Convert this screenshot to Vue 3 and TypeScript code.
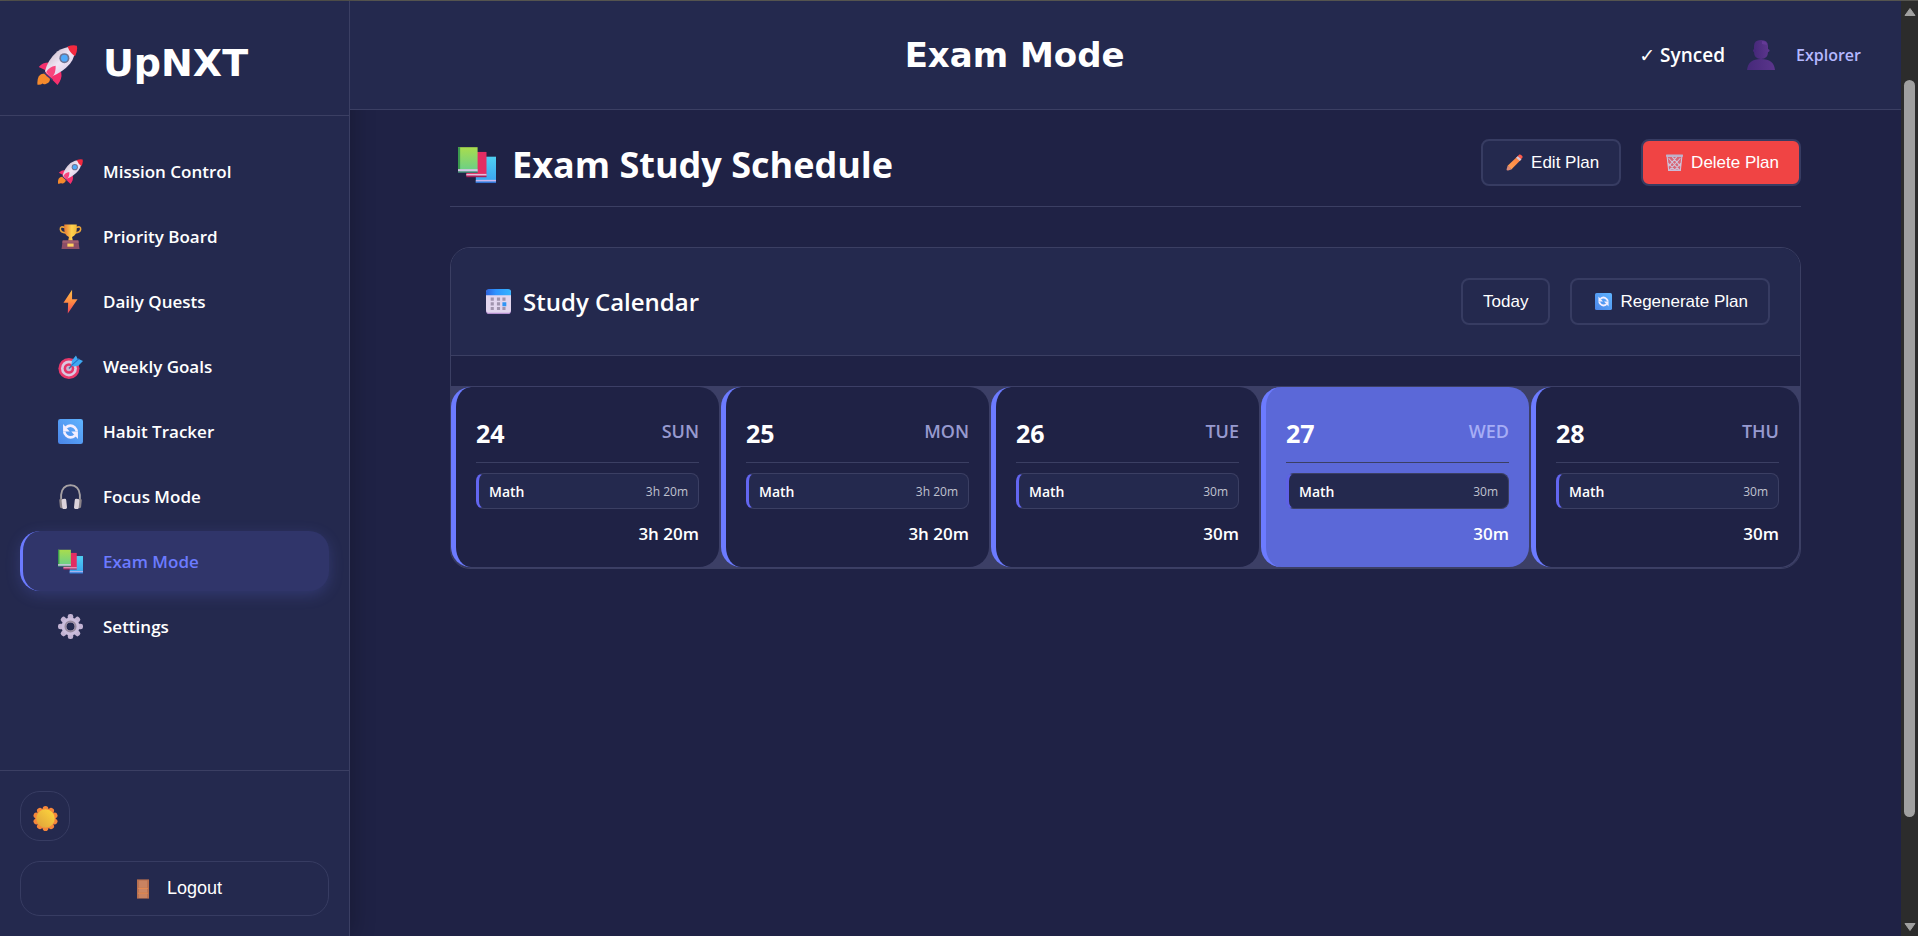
<script setup lang="ts">
interface NavItem {
  label: string
  icon: string
  active?: boolean
}

interface StudyDay {
  date: number
  weekday: string
  subject: string
  duration: string
  today?: boolean
}

const navItems: NavItem[] = [
  { label: 'Mission Control', icon: 'rocket' },
  { label: 'Priority Board', icon: 'trophy' },
  { label: 'Daily Quests', icon: 'bolt' },
  { label: 'Weekly Goals', icon: 'target' },
  { label: 'Habit Tracker', icon: 'refresh' },
  { label: 'Focus Mode', icon: 'headphones' },
  { label: 'Exam Mode', icon: 'books', active: true },
  { label: 'Settings', icon: 'gear' },
]

const days: StudyDay[] = [
  { date: 24, weekday: 'SUN', subject: 'Math', duration: '3h 20m' },
  { date: 25, weekday: 'MON', subject: 'Math', duration: '3h 20m' },
  { date: 26, weekday: 'TUE', subject: 'Math', duration: '30m' },
  { date: 27, weekday: 'WED', subject: 'Math', duration: '30m', today: true },
  { date: 28, weekday: 'THU', subject: 'Math', duration: '30m' },
]

const gearAngles: number[] = [0, 45, 90, 135, 180, 225, 270, 315]
const sunAngles: number[] = [0, 36, 72, 108, 144, 180, 216, 252, 288, 324]
</script>

<template>
  <div class="shell">
    <svg class="sprite" aria-hidden="true">
      <defs>
        <linearGradient id="g-hull" x1="0" y1="0" x2="1" y2="1">
          <stop offset="0" stop-color="#b9a9b8" /><stop offset=".5" stop-color="#f1e6f5" /><stop offset="1" stop-color="#cdbfe0" />
        </linearGradient>
        <linearGradient id="g-gold" x1="0" y1="0" x2="1" y2="0">
          <stop offset="0" stop-color="#e87a35" /><stop offset=".6" stop-color="#ffd34d" /><stop offset="1" stop-color="#f2b93c" />
        </linearGradient>
        <linearGradient id="g-bolt" x1="0" y1="0" x2="0" y2="1">
          <stop offset="0" stop-color="#ffc149" /><stop offset=".5" stop-color="#ff8b43" /><stop offset="1" stop-color="#f0405a" />
        </linearGradient>
        <linearGradient id="g-blue" x1="1" y1="0" x2="0" y2="1">
          <stop offset="0" stop-color="#5fb4ff" /><stop offset="1" stop-color="#4a85e8" />
        </linearGradient>
        <linearGradient id="g-green" x1="0" y1="0" x2="0" y2="1">
          <stop offset="0" stop-color="#a9dc4d" /><stop offset="1" stop-color="#66cf8b" />
        </linearGradient>
        <linearGradient id="g-cyan" x1="0" y1="0" x2="0" y2="1">
          <stop offset="0" stop-color="#4fd0f2" /><stop offset="1" stop-color="#3aa2f0" />
        </linearGradient>
        <linearGradient id="g-cal" x1="0" y1="0" x2="1" y2="0">
          <stop offset="0" stop-color="#2c62dd" /><stop offset=".4" stop-color="#2f94ff" /><stop offset="1" stop-color="#35b4ff" />
        </linearGradient>
        <linearGradient id="g-sun" x1="1" y1="0" x2="0" y2="1">
          <stop offset="0" stop-color="#ffd83d" /><stop offset="1" stop-color="#dda03a" />
        </linearGradient>
        <linearGradient id="g-user" x1="0" y1="0" x2="1" y2="0">
          <stop offset="0" stop-color="#46297a" /><stop offset="1" stop-color="#5b358c" />
        </linearGradient>
        <linearGradient id="g-pencil" x1="1" y1="0" x2="0" y2="1">
          <stop offset="0" stop-color="#ff7a3c" /><stop offset="1" stop-color="#ffa354" />
        </linearGradient>
      </defs>

      <symbol id="rocket" viewBox="0 0 32 32">
        <path d="M1 25q2-3 6-2l3 4q0 3-3 4-2 1-3-.2-1 1.200-4 1Q-.5 28 1 25z" fill="#f58a2c" />
        <path d="M9 14Q4 14 1 17.500L6 20l1 5 5 3 4 4Q20 27 19 22z" fill="#f5306d" />
        <path d="M6 21Q8 12 16 5 23 .5 30 1.500 31 8 26 15 20 22 10.500 25.500z" fill="url(#g-hull)" />
        <path d="M24 1.200Q28-.3 31.500.500q.8 4.500-1.500 8.500Q26 6.500 24 1.200z" fill="#f3293f" />
        <circle cx="21.500" cy="10.500" r="4" fill="#6d7392" /><circle cx="21.500" cy="10.500" r="2.700" fill="#4fa9fa" />
        <path d="M14.500 16.500q.5 6-3.500 10L7 21.500q2-4 7.500-5z" fill="#f8457d" />
        <path d="M5 22l7 6" stroke="#373f6c" stroke-width="1.200" />
      </symbol>

      <symbol id="trophy" viewBox="0 0 32 32">
        <path d="M9 4.500Q2.500 2 3 7q.5 4 7 4.500M23 4.500Q29.500 2 29 7q-.5 4-7 4.500" fill="none" stroke="#e9a43a" stroke-width="2" />
        <path d="M8 .5h16v6q0 8-6 10l1 5h-6l1-5q-6-2-6-10z" fill="url(#g-gold)" />
        <path d="M6 21h20l1.500 11h-23z" fill="#8d4d66" /><path d="M6 21h20l.5 3h-21z" fill="#a35f70" />
        <rect x="12" y="25" width="8" height="4" fill="#ffd061" />
      </symbol>

      <symbol id="bolt" viewBox="0 0 32 32">
        <path d="M18 1 7 17.500h6L12.500 31.500 25 13h-7z" fill="url(#g-bolt)" />
      </symbol>

      <symbol id="target" viewBox="0 0 32 32">
        <circle cx="14" cy="18.500" r="13.500" fill="#e8386a" /><circle cx="14" cy="18.500" r="10.200" fill="#dcc7df" />
        <circle cx="14" cy="18.500" r="6.800" fill="#e53467" /><circle cx="14" cy="18.500" r="3.500" fill="#c8b7d4" />
        <path d="M14 18.500 24 8.500" stroke="#476fa5" stroke-width="2" />
        <path d="m17 14 1-6 5-6 2 4 1.500.5L32 9l-6 6-6 1z" fill="#3ea8f2" /><path d="m18 14 9-8" stroke="#236fc4" stroke-width="1.300" />
      </symbol>

      <symbol id="refresh" viewBox="0 0 32 32">
        <rect width="32" height="32" rx="3" fill="url(#g-blue)" />
        <path d="M10 11Q16 6 21.500 11q2.500 2.500 2.500 5M22 21Q16 26 10.500 21 8 18.500 8 16" fill="none" stroke="#f3eeff" stroke-width="3.400" />
        <path d="M6.500 6.500v9.500H15zM25.500 25.500V16H17z" fill="#f3eeff" />
      </symbol>

      <symbol id="headphones" viewBox="0 0 32 32">
        <path d="M4 20V14Q5 2 16 1.500 27 2 28 14v6" fill="none" stroke="#a7a2a5" stroke-width="2.400" />
        <rect x="2" y="19" width="5" height="12" rx="2" fill="#8b8388" transform="rotate(-6 4 25)" />
        <rect x="25" y="19" width="5" height="12" rx="2" fill="#8b8388" transform="rotate(6 28 25)" />
        <rect x="5" y="19" width="6" height="13" rx="2" fill="#dcd3db" transform="rotate(-6 8 25)" />
        <rect x="21" y="19" width="6" height="13" rx="2" fill="#dcd3db" transform="rotate(6 24 25)" />
      </symbol>

      <symbol id="books" viewBox="0 0 32 32">
        <path d="M15 9h17v22H15z" fill="url(#g-cyan)" /><path d="M15 28.500h17V30H15z" fill="#cbb7ee" /><path d="M15 30h17v1.200H15z" fill="#3174d6" />
        <path d="M7 5h17v20H7z" fill="#e32d63" /><path d="M7 23.500h17v1.500H7z" fill="#e6bfdb" /><path d="M7 25h17v1.300H7z" fill="#a91e57" />
        <path d="M0 1h16.500v21H0z" fill="url(#g-green)" /><path d="M0 1h1.800v21H0z" fill="#3b9a4e" />
        <path d="M0 19.500h16.500v2H0z" fill="#d4c5e7" /><path d="M0 21.500h16.500v1.200H0z" fill="#39786e" />
      </symbol>

      <symbol id="gear" viewBox="0 0 32 32">
        <rect v-for="a in gearAngles" :key="a" x="12.500" y="0" width="7" height="9" rx="3" fill="#c3b3d3" :transform="`rotate(${a} 16 16)`" />
        <circle cx="16" cy="16" r="8.500" fill="none" stroke="#cbbddc" stroke-width="6" />
        <circle cx="16" cy="16" r="6.500" fill="none" stroke="#978a9f" stroke-width="2.500" />
      </symbol>

      <symbol id="sun" viewBox="0 0 32 32">
        <circle v-for="a in sunAngles" :key="a" cx="16" cy="3.600" r="3.600" fill="#f5873b" :transform="`rotate(${a} 16 16)`" />
        <circle cx="16" cy="16" r="13" fill="#f5873b" /><circle cx="16" cy="16" r="11.800" fill="url(#g-sun)" />
      </symbol>

      <symbol id="door" viewBox="0 0 20 32">
        <rect x="0" y="0" width="20" height="32" fill="#b8704f" /><rect x="3" y="2" width="14" height="12" fill="#c98361" />
        <rect x="3" y="16" width="14" height="6" fill="#cb8664" /><rect x="3" y="24" width="14" height="7" fill="#c98361" />
        <path d="M2 15h16M2 23h16" stroke="#ed9153" stroke-width="1.500" />
      </symbol>

      <symbol id="user" viewBox="0 0 28 30">
        <path d="M0 30Q1 19 14 19t14 11z" fill="url(#g-user)" />
        <path d="M7 6Q7 0 14 0t7 6v6q0 7-7 7t-7-7z" fill="url(#g-user)" />
        <circle cx="7.500" cy="10.500" r="1.500" fill="#46297a" /><circle cx="21" cy="10.500" r="1.500" fill="#5b358c" />
        <path d="M15 1q5 0 5 4l-5-1z" fill="#643a96" />
      </symbol>

      <symbol id="pencil" viewBox="0 0 32 32">
        <path d="M3 22 22 4l7 6L10 29z" fill="url(#g-pencil)" /><path d="M22 4l3-3q3-1 6 3 1 2-1 4l-2 2z" fill="#ff5a4b" />
        <path d="m19 7 3-3 7 6-3 3z" fill="#d5c6d8" /><path d="m3 22-2 7q0 2.500 3 2l6-2q-1-5-7-7z" fill="#d98a78" />
      </symbol>

      <symbol id="trash" viewBox="0 0 32 32">
        <path d="M2 3h28l-3 28H5z" fill="#d96576" />
        <path d="M2 4h28l-3 27H5zM5 8l20 22M12 6l15 17M3 16l14 15M27 8 7 30M20 6 5 23M29 16 16 31" fill="none" stroke="#cfc4da" stroke-width="2" />
        <rect x="0" y="1" width="32" height="4" rx="1" fill="#bdb2cb" /><path d="M5 29h22v3H5z" fill="#c9bcd8" />
      </symbol>

      <symbol id="calendar" viewBox="0 0 32 32">
        <rect x="0" y="1" width="32" height="31" rx="4" fill="#b58fd0" /><rect x="0" y="1" width="32" height="29.500" rx="4" fill="#e2d6ee" />
        <path d="M0 8V4q0-4 4-4h24q4 0 4 4v4z" fill="url(#g-cal)" />
        <path d="M6 11h4v4H6zM14 11h4v4h-4zM21 11h4v4h-4zM6 17h4v4H6zM14 17h4v4h-4zM6 23h4v4H6zM14 23h4v4h-4zM21 23h4v4h-4z" fill="#a094ad" />
        <path d="M21 17h5v5h-5z" fill="#2f94f5" />
      </symbol>
    </svg>

    <aside class="sidebar">
      <div class="brand">
        <svg class="brand-icon" aria-hidden="true"><use href="#rocket" /></svg>
        <span class="brand-name">UpNXT</span>
      </div>
      <nav class="nav">
        <a v-for="item in navItems" :key="item.label" href="#" class="nav-item" :class="{ active: item.active }">
          <svg class="nav-icon" aria-hidden="true"><use :href="`#${item.icon}`" /></svg>
          {{ item.label }}
        </a>
      </nav>
      <div class="side-foot">
        <button type="button" class="theme" aria-label="Switch theme">
          <svg class="nav-icon" aria-hidden="true"><use href="#sun" /></svg>
        </button>
        <button type="button" class="logout">
          <svg class="door" aria-hidden="true"><use href="#door" /></svg>
          Logout
        </button>
      </div>
    </aside>

    <div class="page">
      <header class="topbar">
        <h1 class="page-title">Exam Mode</h1>
        <div class="account">
          <span class="synced"><span class="tick">✓</span> Synced</span>
          <svg class="avatar" aria-hidden="true"><use href="#user" /></svg>
          <span class="user-name">Explorer</span>
        </div>
      </header>

      <main class="content">
        <div class="plan-head">
          <h2 class="plan-title">
            <svg class="books" aria-hidden="true"><use href="#books" /></svg>
            Exam Study Schedule
          </h2>
          <div class="actions">
            <button type="button" class="btn">
              <svg class="btn-icon" aria-hidden="true"><use href="#pencil" /></svg>Edit Plan
            </button>
            <button type="button" class="btn danger">
              <svg class="btn-icon" aria-hidden="true"><use href="#trash" /></svg>Delete Plan
            </button>
          </div>
        </div>

        <section class="calendar">
          <div class="cal-head">
            <h3 class="cal-title">
              <svg class="nav-icon" aria-hidden="true"><use href="#calendar" /></svg>
              Study Calendar
            </h3>
            <div class="actions">
              <button type="button" class="btn">Today</button>
              <button type="button" class="btn">
                <svg class="btn-icon" aria-hidden="true"><use href="#refresh" /></svg>Regenerate Plan
              </button>
            </div>
          </div>
          <div class="days">
            <article v-for="day in days" :key="day.date" class="day" :class="{ today: day.today }">
              <div class="day-head">
                <span class="date">{{ day.date }}</span>
                <span class="weekday">{{ day.weekday }}</span>
              </div>
              <div class="task">
                <span class="subject">{{ day.subject }}</span>
                <span class="duration">{{ day.duration }}</span>
              </div>
              <div class="total">{{ day.duration }}</div>
            </article>
          </div>
        </section>
      </main>
    </div>

    <div class="scrollbar" aria-hidden="true">
      <svg class="arrow" viewBox="0 0 12 10"><path d="M6 1.500 11 8.500H1z" /></svg>
      <div class="track"><div class="thumb"></div></div>
      <svg class="arrow" viewBox="0 0 12 10"><path d="M6 8.500 11 1.500H1z" /></svg>
    </div>
  </div>
</template>

<style>
body {
  margin: 0;
  background: #1f2245;
}
</style>

<style scoped>
.shell {
  --panel: #24294e;
  --base: #1f2245;
  --line: #3b3f63;
  --accent: #6c7bff;
  box-sizing: border-box;
  display: flex;
  min-height: 100vh;
  border-top: 1px solid #55544f;
  background: var(--base);
  color: #fff;
  font-family: "Open Sans", "Noto Sans", sans-serif;
  font-size: 17px;
  font-weight: 600;
}
.shell * {
  box-sizing: border-box;
}
.sprite {
  position: absolute;
  width: 0;
  height: 0;
}
svg {
  flex: none;
}
.sidebar {
  display: flex;
  flex-direction: column;
  flex: none;
  width: 350px;
  border-right: 1px solid var(--line);
  background: var(--panel);
  box-shadow: 5px 0 20px rgba(0, 0, 0, 0.2);
}
.brand {
  display: flex;
  align-items: center;
  gap: 25px;
  height: 115px;
  padding: 14px 37px 0;
  border-bottom: 1px solid var(--line);
}
.brand-icon {
  width: 41px;
  height: 40px;
}
.brand-name {
  margin-top: -4px;
  font: bold 38px "DejaVu Sans", sans-serif;
}
.nav {
  display: flex;
  flex-direction: column;
  flex: 1;
  gap: 5px;
  padding: 25px 20px;
}
.nav-item {
  display: flex;
  align-items: center;
  gap: 20px;
  height: 60px;
  padding: 0 35px;
  border-left: 3px solid transparent;
  border-radius: 20px;
  color: #fff;
  text-decoration: none;
}
.nav-item.active {
  border-left-color: var(--accent);
  background: #30356a;
  color: var(--accent);
  box-shadow: 0 4px 15px rgba(108, 123, 255, 0.2);
}
.nav-icon {
  width: 25px;
  height: 25px;
}
.side-foot {
  display: flex;
  flex-direction: column;
  gap: 20px;
  padding: 20px;
  border-top: 1px solid var(--line);
}
.theme,
.logout {
  display: flex;
  align-items: center;
  justify-content: center;
  border: 1px solid #373c62;
  border-radius: 20px;
  background: transparent;
  color: #fff;
  font: 18px "Liberation Sans", Arial, sans-serif;
}
.theme {
  width: 50px;
  height: 50px;
  padding: 4px 0 0;
}
.logout {
  gap: 18px;
  width: 100%;
  height: 55px;
  padding: 0 0 0 10px;
}
.door {
  width: 12px;
  height: 20px;
}
.page {
  display: flex;
  flex: 1;
  flex-direction: column;
  min-width: 0;
}
.topbar {
  display: grid;
  grid-template-columns: 1fr auto;
  align-items: center;
  height: 109px;
  padding: 0 40px;
  border-bottom: 1px solid var(--line);
  background: var(--panel);
}
.page-title {
  margin: 0;
  font: bold 34px "DejaVu Sans", sans-serif;
  text-align: center;
}
.account {
  display: flex;
  align-items: center;
  justify-content: flex-end;
}
.synced {
  font-size: 19px;
}
.tick {
  font-family: "DejaVu Sans", sans-serif;
}
.avatar {
  width: 28px;
  height: 30px;
  margin: 0 21px 0 22px;
}
.user-name {
  color: #b4b8ff;
  font-size: 16px;
}
.content {
  padding: 29px 100px;
}
.plan-head {
  display: flex;
  align-items: flex-start;
  justify-content: space-between;
  height: 68px;
  border-bottom: 1px solid var(--line);
}
.plan-title {
  display: flex;
  align-items: center;
  gap: 16px;
  margin: 0;
  padding-left: 8px;
  font-size: 36px;
  font-weight: 700;
  line-height: 52px;
}
.books {
  width: 38px;
  height: 38px;
}
.actions {
  display: flex;
  gap: 20px;
}
.btn {
  display: flex;
  align-items: center;
  gap: 8px;
  height: 47px;
  padding: 0 20px;
  border: 2px solid #373c62;
  border-radius: 8px;
  background: var(--panel);
  color: #fff;
  font: 17px "Liberation Sans", Arial, sans-serif;
}
.btn.danger {
  background: #f04444;
}
.btn-icon {
  width: 17px;
  height: 17px;
  margin-left: 3px;
}
.calendar {
  margin-top: 40px;
  overflow: hidden;
  border: 1px solid var(--line);
  border-radius: 20px;
}
.cal-head {
  display: flex;
  align-items: center;
  justify-content: space-between;
  padding: 30px;
  border-bottom: 1px solid var(--line);
  background: var(--panel);
}
.cal-title {
  display: flex;
  align-items: center;
  gap: 12px;
  margin: 0;
  padding-left: 5px;
  font-size: 24px;
  font-weight: 600;
}
.days {
  display: grid;
  grid-template-columns: repeat(5, 1fr);
  gap: 2px;
  margin-top: 30px;
  padding: 1px 1px 1px 0;
  background: #3c3f66;
}
.day {
  height: 180px;
  padding: 20px 20px 0;
  border-left: 5px solid var(--accent);
  border-radius: 20px;
  background: var(--base);
}
.day.today {
  background: #5b68d8;
}
.day-head {
  display: flex;
  justify-content: space-between;
  height: 56px;
  padding-top: 8px;
  border-bottom: 1px solid var(--line);
}
.date {
  font-size: 25px;
  font-weight: 700;
  line-height: 36px;
}
.weekday {
  color: #979acf;
  font-size: 18px;
  line-height: 32px;
}
.today .weekday {
  color: #a6adf5;
}
.task {
  display: flex;
  align-items: center;
  justify-content: space-between;
  height: 36px;
  margin-top: 10px;
  padding: 0 10px;
  border: 1px solid var(--line);
  border-left: 3px solid #6366f1;
  border-radius: 8px;
  background: var(--panel);
}
.today .task {
  border-left-color: #5f62e6;
}
.subject {
  font-size: 14px;
}
.duration {
  color: #c0c2d0;
  font-size: 12px;
  font-weight: 400;
}
.total {
  margin-top: 10px;
  font-size: 17px;
  line-height: 30px;
  text-align: right;
}
.scrollbar {
  display: flex;
  flex-direction: column;
  align-items: center;
  justify-content: space-between;
  flex: none;
  width: 17px;
  padding: 6px 0 4px;
  background: #2c2c2c;
}
.arrow {
  width: 12px;
  height: 10px;
  fill: #a0a0a0;
  stroke: #a0a0a0;
  stroke-linejoin: round;
}
.track {
  flex: 1;
  width: 11px;
  padding: 63px 0 4px;
}
.thumb {
  height: 88%;
  border-radius: 6px;
  background: #a0a0a0;
}
</style>
